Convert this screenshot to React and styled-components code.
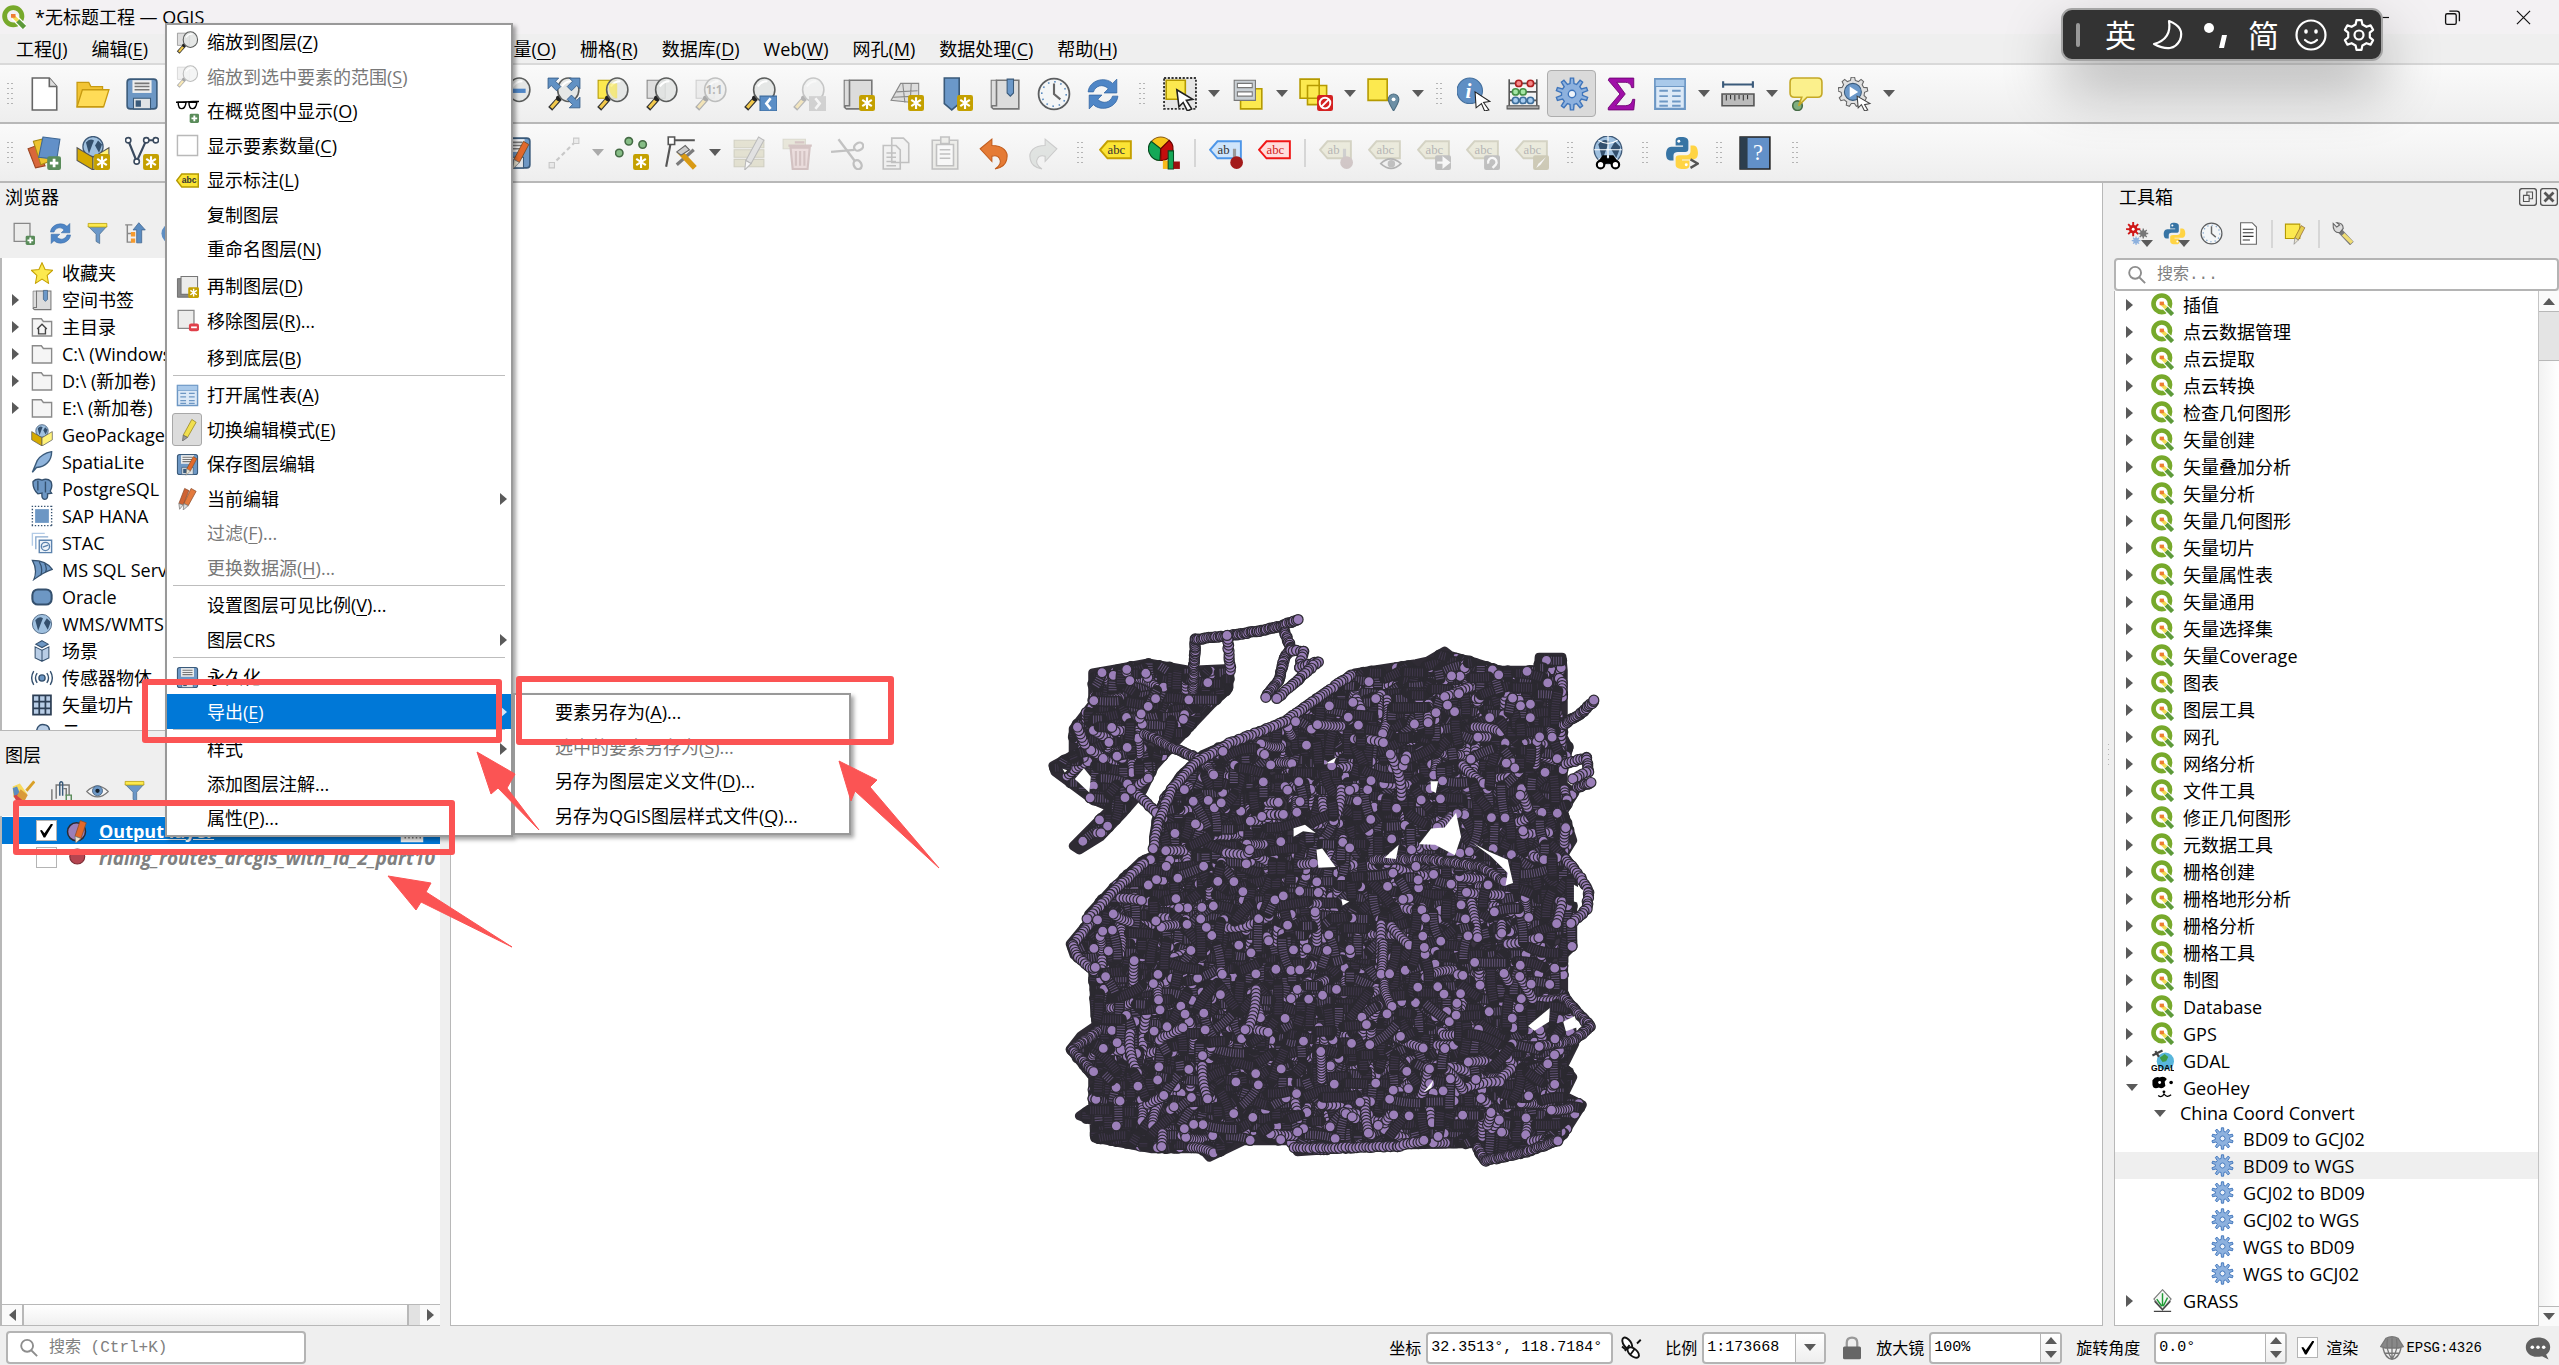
import React, { useMemo, useState } from "react";
import styled, { createGlobalStyle, css } from "styled-components";

/* ---------- icons ---------- */

const gearPath = (teeth, outer, inner, cx = 16, cy = 16) => {
  const pts = [];
  const step = (Math.PI * 2) / teeth;
  for (let i = 0; i < teeth; i++) {
    const a = i * step - Math.PI / 2;
    [
      [-0.3, inner],
      [-0.16, outer],
      [0.16, outer],
      [0.3, inner],
    ].forEach(([k, r]) => {
      const x = cx + Math.cos(a + k * step) * r;
      const y = cy + Math.sin(a + k * step) * r;
      pts.push(`${x.toFixed(1)} ${y.toFixed(1)}`);
    });
  }
  return `M${pts.join("L")}Z`;
};

const star = (
  <g>
    <rect x="17" y="17" width="15" height="15" rx="2" fill="#c4a000" />
    <path d="M24.5 19v11M20 21.5l9 6M29 21.5l-9 6" stroke="#fff" strokeWidth="2" />
  </g>
);
const plus = (
  <g>
    <rect x="19" y="19" width="13" height="13" rx="2" fill="#5a8c5a" />
    <path d="M25.5 21.5v8M21.5 25.5h8" stroke="#fff" strokeWidth="2.6" />
  </g>
);
const lens = (
  <g>
    <path d="M12 20L3 30" stroke="#333" strokeWidth="5" />
    <path d="M10 22L4 29" stroke="#f2c94c" strokeWidth="3" />
    <circle cx="11" cy="20" r="2.5" fill="#222" />
    <ellipse cx="20" cy="12" rx="10" ry="11" fill="#e2e4e3" fillOpacity="0.85" stroke="#5b5d5c" strokeWidth="1.5" />
    <path d="M14 9q3-5 9-5" stroke="#fff" strokeWidth="2" fill="none" />
  </g>
);
const cursor = (
  <path d="M13 12l15 9-6 1 5 8-4 2-4-8-4 4z" fill="#fff" stroke="#222" strokeWidth="1.5" />
);
const disk = (
  <g>
    <rect x="2" y="2" width="28" height="28" rx="3" fill="#6d97c4" stroke="#3a5a7a" strokeWidth="1.5" />
    <path d="M7 3h18v12H7z" fill="#eee" />
    <path d="M9 6h14M9 9h14M9 12h14" stroke="#777" strokeWidth="1.5" />
    <path d="M8 20h16v10H8z" fill="#dfe3e6" stroke="#3a5a7a" />
    <path d="M10 22h5v6h-5z" fill="#3a5a7a" />
  </g>
);
const pencil = (color) => (
  <g>
    <path d="M24 5l5 3-9 17-5-3z" fill={color} stroke="#7a4a20" strokeWidth="0.8" />
    <path d="M15 22l5 3-6 6z" fill="#e8e2d0" stroke="#777" strokeWidth="0.8" />
  </g>
);
const tag = (fill, stroke, text, color) => (
  <g>
    <path d="M8 5h22v16H8L1 13z" fill={fill} stroke={stroke} strokeWidth="1.8" />
    <text x="8" y="17" fontSize="12" fontFamily="Liberation Serif" fill={color}>
      {text}
    </text>
  </g>
);
const globe = (cx, cy, r) => (
  <g>
    <circle cx={cx} cy={cy} r={r} fill="#9fc0df" stroke="#3f5a78" strokeWidth="1.2" />
    <path
      d={`M${cx - r * 0.7} ${cy - r * 0.4}q${r * 0.4} ${-r * 0.5} ${r * 0.8} ${-r * 0.2}l${-r * 0.2} ${r * 0.5}l${-r * 0.3} ${r * 0.8}z`}
      fill="#34506e"
    />
    <path
      d={`M${cx + r * 0.2} ${cy - r * 0.1}l${r * 0.3} ${-r * 0.5}l${r * 0.4} ${r * 0.4}l${-r * 0.3} ${r * 0.8}z`}
      fill="#34506e"
    />
  </g>
);
const refresh = (
  <g fill="#4f86c6" stroke="#2f62a0" strokeWidth="0.7">
    <path d="M2 14C3 3 18-1 25 6l4-4v13H17l4-4C16 6 9 8 7 14z" />
    <path d="M30 18C29 29 14 33 7 26l-4 4V17h12l-4 4c5 5 12 3 14-3z" />
  </g>
);
const python = (
  <g>
    <path
      d="M16 1c-6 0-6 2-6 4v4h7v1H6c-4 0-5 4-5 7s1 6 4 6h3v-5c0-2 2-3 4-3h7c2 0 3-1 3-3V5c0-3-3-4-6-4z"
      fill="#3774a4"
    />
    <path
      d="M17 31c6 0 6-2 6-4v-4h-7v-1h10c4 0 5-3 5-6s-1-7-4-7h-3v5c0 3-2 4-4 4h-6c-3 0-4 1-4 3v6c0 3 3 4 7 4z"
      fill="#ffd444"
    />
    <circle cx="13" cy="5" r="1.4" fill="#fff" />
    <circle cx="20" cy="27" r="1.4" fill="#fff" />
  </g>
);
const funnel = (
  <g>
    <path d="M3 6h26L19 17v13l-5-3V17z" fill="#6b98c9" stroke="#4a6b8c" />
    <path d="M3 2h26v5H3z" fill="#fce94f" stroke="#b59a00" />
  </g>
);
const folder = (
  <path d="M2 4h13l3 4h12v21H2z" fill="#f5f5f5" stroke="#8a8a8a" strokeWidth="2" />
);
const book = (
  <g>
    <path d="M3 3h5v24H5q-2 0-2 2z" fill="#ddd" stroke="#777" />
    <path d="M8 3h21v27H5q-2-1-1-3h4z" fill="#dcdcdc" stroke="#777" strokeWidth="1.5" />
  </g>
);
const clock = (
  <g>
    <circle cx="16" cy="16" r="14.5" fill="#f4f6f7" stroke="#5c5e60" strokeWidth="1.7" />
    <circle cx="16" cy="16" r="11.5" fill="none" stroke="#5b8cc0" strokeWidth="1.5" strokeDasharray="1.5 4.5" />
    <path d="M16 6v10l6 5" fill="none" stroke="#666" strokeWidth="2" />
  </g>
);
const tableShape = (
  <g>
    <path d="M2 2h28v28H2z" fill="#dce9f7" stroke="#6d97c4" strokeWidth="2" />
    <path d="M2 2h28v7H2z" fill="#a9c9ea" stroke="#6d97c4" />
    <path d="M6 13h8M18 13h8M6 18h8M18 18h8M6 23h8M18 23h8M6 27h8M18 27h8" stroke="#6d97c4" strokeWidth="1.8" />
  </g>
);
const page = (
  <path d="M3 2h22v25H3z" fill="#ececeb" stroke="#888" strokeWidth="1.8" />
);

const icons = {
  qgis: (
    <g fill="none">
      <circle cx="15" cy="15" r="11.5" stroke="#77a92b" strokeWidth="6.5" />
      <path d="M16 16l15 15" stroke="#fff" strokeWidth="9" />
      <path d="M21 21l9 9" stroke="#5d9a3a" strokeWidth="6" />
      <path d="M15 15l6 6" stroke="#f3dd55" strokeWidth="5" />
      <path d="M12 12h6v5h-6z" fill="#ee7d33" />
    </g>
  ),
  file: (
    <g fill="#fff" stroke="#666" strokeWidth="1.5">
      <path d="M5 1h16l7 8v22H5z" />
      <path d="M21 1v8h7" fill="#ddd" />
    </g>
  ),
  open: (
    <g stroke="#c79a10" strokeWidth="1.2">
      <path d="M1 5h11l2 4h11v19H1z" fill="#f2c434" />
      <path d="M6 12h25l-5 16H1z" fill="#ffdc57" />
    </g>
  ),
  save: disk,
  zoomOut: (
    <g>
      {lens}
      <path d="M14 13h12" stroke="#4f86c6" strokeWidth="4" />
    </g>
  ),
  zoomFull: (
    <g>
      {lens}
      <path
        d="M1 1h10L8 4l5 5-4 4-5-5-3 3zM31 1H21l3 3-5 5 4 4 5-5 3 3zM31 29H21l3-3-5-5 4-4 5 5 3-3z"
        fill="#6191c4"
        stroke="#335a85"
        strokeWidth="0.8"
      />
    </g>
  ),
  zoomSelection: (
    <g>
      <path d="M2 3h17v17H2z" fill="#fce94f" stroke="#b59a00" />
      {lens}
      <path d="M12 6h8v14q-8-1-8-14z" fill="#fce94f" opacity="0.6" />
    </g>
  ),
  zoomLayer: (
    <g>
      <path d="M2 3h17v17H2z" fill="#dedede" stroke="#888" />
      {lens}
    </g>
  ),
  zoomNative: (
    <g opacity="0.35">
      <path d="M2 3h17v17H2z" fill="#ddd" stroke="#888" />
      {lens}
      <text x="11" y="16" fontSize="11" fontWeight="700" fontFamily="Open Sans" fill="#444">
        1:1
      </text>
    </g>
  ),
  zoomLast: (
    <g>
      {lens}
      <path d="M16 18h16v14H16z" fill="#5b8ec6" stroke="#3b6a9c" />
      <path d="M26 20l-4 5 4 5" fill="none" stroke="#fff" strokeWidth="2.5" />
    </g>
  ),
  zoomNext: (
    <g opacity="0.3">
      {lens}
      <path d="M16 18h16v14H16z" fill="#888" />
      <path d="M22 20l4 5-4 5" fill="none" stroke="#fff" strokeWidth="2.5" />
    </g>
  ),
  newMap: (
    <g>
      {book}
      {star}
    </g>
  ),
  mesh: (
    <g>
      <path d="M1 22L10 6h17v16l-6 2z" fill="#ddd" stroke="#888" />
      <path d="M6 14l20-1M12 6l2 18M20 6l-1 18M3 19l23-1" stroke="#888" fill="none" />
      {star}
    </g>
  ),
  bookmarkNew: (
    <g>
      <path d="M5 1h14v24l-7 6-7-6z" fill="#6b98c9" stroke="#3a5a7a" strokeWidth="1.5" />
      {star}
    </g>
  ),
  bookmarks: (
    <g>
      {book}
      <path d="M18 2h6v13l-3 3-3-3z" fill="#6b98c9" stroke="#3a5a7a" />
    </g>
  ),
  clock,
  refresh,
  select: (
    <g>
      <path d="M1 1h30v29H1z" fill="#e6e6e6" stroke="#333" strokeWidth="1.8" strokeDasharray="2 1.5" />
      <path d="M3 3h18v18H3z" fill="#fce94f" stroke="#b59a00" strokeWidth="1.5" />
      {cursor}
    </g>
  ),
  selectForm: (
    <g>
      <path d="M9 11h20v19H9z" fill="#fce94f" stroke="#b59a00" strokeWidth="1.5" />
      <path d="M3 3h20v19H3z" fill="#c9cfd4" stroke="#777" />
      <path d="M6 6h14v4H6zM6 14h14v4H6z" fill="#fff" stroke="#777" />
    </g>
  ),
  deselect: (
    <g>
      <path d="M1 2h18v18H1zM8 8h18v18H8z" fill="#fce94f" stroke="#b59a00" strokeWidth="1.5" />
      <rect x="17" y="17" width="15" height="15" rx="2" fill="#d42121" />
      <circle cx="24.5" cy="24.5" r="5" fill="none" stroke="#fff" strokeWidth="1.8" />
      <path d="M21 28l7-7" stroke="#fff" strokeWidth="1.8" />
    </g>
  ),
  selectLocation: (
    <g>
      <path d="M1 2h18v20H1z" fill="#fce94f" stroke="#b59a00" strokeWidth="1.5" />
      <path d="M25 32q-5-8-5-11a5 5 0 0110 0q0 3-5 11z" fill="#6c8fa5" stroke="#4b6c80" />
      <circle cx="25" cy="21" r="1.8" fill="#fff" />
    </g>
  ),
  identify: (
    <g>
      <circle cx="12" cy="13" r="12" fill="#5f8fc4" stroke="#44709e" />
      <text x="8" y="20" fontSize="20" fontStyle="italic" fontWeight="700" fontFamily="Liberation Serif" fill="#fff">
        i
      </text>
      <path d="M17 14l14 9-6 1 5 7-4 1-3-7-5 4z" fill="#fff" stroke="#222" />
    </g>
  ),
  abacus: (
    <g>
      <path d="M3 2v25M29 2v25M3 6h26M3 14h26M3 22h26" stroke="#555" strokeWidth="1.5" />
      <path d="M1 27h30v3H1z" fill="#aaa" stroke="#555" />
      <g strokeWidth="1.5">
        <g fill="#f58a8a" stroke="#b02020">
          <circle cx="12" cy="6" r="3" />
          <circle cx="23" cy="6" r="3" />
        </g>
        <g fill="#a5e6a5" stroke="#459045">
          <circle cx="9" cy="14" r="3" />
          <circle cx="16" cy="14" r="3" />
        </g>
        <g fill="#a9cdf0" stroke="#3e6f9c">
          <circle cx="9" cy="22" r="3" />
          <circle cx="16" cy="22" r="3" />
          <circle cx="23" cy="22" r="3" />
        </g>
      </g>
    </g>
  ),
  gear: (
    <g stroke="#3f75bb" strokeWidth="1.3">
      <path d={gearPath(10, 15, 10)} fill="#8db1de" />
      <circle cx="16" cy="16" r="3.5" fill="#eef3fa" />
    </g>
  ),
  sigma: (
    <path
      d="M5 1h23v9h-2q-1-5-6-5h-8l8 11-9 11h9q6 0 7-6h2l-1 10H4v-2l11-13L4 3z"
      fill="#a00fa8"
      stroke="#6b006f"
      strokeWidth="0.8"
    />
  ),
  table: tableShape,
  ruler: (
    <g>
      <path d="M1 7h30M2 4v6M30 4v6" stroke="#3a5a7a" strokeWidth="2" />
      <path d="M1 16h30v11H1z" fill="#bbb" stroke="#555" strokeWidth="1.5" />
      <path d="M5 17v5M9 17v4M13 17v5M17 17v4M21 17v5M25 17v4" stroke="#333" />
    </g>
  ),
  note: (
    <g>
      <circle cx="8" cy="27" r="4.5" fill="#7fae7f" stroke="#456b45" strokeWidth="1.5" />
      <path
        d="M5 1h22q4 0 4 4v10q0 4-4 4H17l-8 8 3-8H5q-4 0-4-4V5q0-4 4-4z"
        fill="#fbf08c"
        stroke="#c4a826"
        strokeWidth="1.5"
      />
    </g>
  ),
  run: (
    <g>
      <path d={gearPath(9, 14, 11, 14, 14)} fill="#e0e0e0" stroke="#666" />
      <circle cx="14" cy="14" r="8" fill="#6b98c9" stroke="#3a5a7a" />
      <path d="M11 9l8 5-8 5z" fill="#fff" />
      <path d="M18 18l12 7-5 1 3 5-3 1-3-6-3 3z" fill="#fff" stroke="#444" />
    </g>
  ),
  layers: (
    <g>
      <path d="M1 12l8-3 8 19-9 2z" fill="#d9673a" stroke="#9a4523" />
      <path d="M6 5l8-2 7 21-8 3z" fill="#edc32d" stroke="#a88a12" />
      <path d="M15 1l16 2-3 19-17-2z" fill="#6290c8" stroke="#3f6896" />
      {plus}
    </g>
  ),
  geopackage: (
    <g>
      {globe(16, 10, 9.5)}
      <path d="M1 11l15 9v12L1 23z" fill="#d6aa00" stroke="#555" />
      <path d="M31 11l-15 9v12l15-9z" fill="#fff27a" stroke="#555" />
      {star}
    </g>
  ),
  vertices: (
    <g>
      <path d="M3 4l8 20 9-20h9" fill="none" stroke="#3a4a5e" strokeWidth="2" />
      <g fill="#fff" stroke="#3a4a5e" strokeWidth="1.5">
        <circle cx="3" cy="4" r="2.5" />
        <circle cx="11" cy="24" r="2.5" />
        <circle cx="20" cy="4" r="2.5" />
        <circle cx="29" cy="4" r="2.5" />
      </g>
      {star}
    </g>
  ),
  saveEdits: (
    <g>
      {disk}
      {pencil("#e2692b")}
    </g>
  ),
  digitize: (
    <g opacity="0.4" stroke="#888" fill="#ddd">
      <path d="M4 28L28 4" strokeDasharray="4 3" strokeWidth="2" />
      <path d="M2 25h5v5H2zM25 2h5v5h-5z" />
    </g>
  ),
  points: (
    <g>
      <g fill="#86bd86" stroke="#456b45" strokeWidth="1.5">
        <circle cx="13" cy="5" r="3.5" />
        <circle cx="26" cy="8" r="3.5" />
        <circle cx="4" cy="16" r="3.5" />
      </g>
      {star}
    </g>
  ),
  vertexTool: (
    <g>
      <path d="M7 4h22M6 8L2 29" stroke="#555" strokeWidth="2" />
      <path d="M4 1h6v7H4z" fill="#fff" stroke="#555" strokeWidth="1.5" />
      <path d="M12 27l16-14" stroke="#7b7b7b" strokeWidth="3" />
      <path d="M14 14l15 16" stroke="#d99a14" strokeWidth="5" />
      <path d="M12 15l8-6 4 4-8 5z" fill="#ccc" stroke="#666" />
    </g>
  ),
  tableEdit: (
    <g opacity="0.45">
      <path d="M2 4h28v7H2zM2 13h28v7H2zM2 22h28v7H2z" fill="#cfcba8" stroke="#a8a588" />
      <path d="M25 1l5 3-12 22-5-3z" fill="#ccc" stroke="#777" />
      <path d="M13 23l5 3-6 6z" fill="#fff" stroke="#777" />
    </g>
  ),
  trash: (
    <g opacity="0.35">
      <path d="M2 3h21v9H2z" fill="#cfcba8" stroke="#a8a588" />
      <path d="M7 9h22M13 6h9M9 11h18l-2 20H11zM14 14v14M18 14v14M22 14v14" fill="#dcb5b5" stroke="#9b6b6b" strokeWidth="2" />
    </g>
  ),
  cut: (
    <g opacity="0.4" fill="none" stroke="#777" strokeWidth="2.2">
      <path d="M1 15l22-2M8 3l15 20" />
      <ellipse cx="27" cy="10" rx="4.500" ry="3.500" transform="rotate(-30 27 10)" />
      <ellipse cx="26" cy="27" rx="3.500" ry="4.500" transform="rotate(-30 26 27)" />
    </g>
  ),
  copy: (
    <g opacity="0.4" fill="#eee" stroke="#777" strokeWidth="1.5">
      <path d="M12 2h11l5 5v18H12zM4 9h12l4 4v18H4z" />
      <path d="M7 16h9M7 20h9M7 24h9M7 28h9" />
    </g>
  ),
  paste: (
    <g opacity="0.4" fill="#e2e2da" stroke="#777" strokeWidth="1.5">
      <path d="M4 4h24v27H4z" />
      <path d="M8 8h16v20H8z" fill="#fff" />
      <path d="M12 1h8v6h-8zM11 13h10M11 17h10M11 21h10" />
    </g>
  ),
  undo: (
    <path d="M3 12L14 3v6c10 0 16 5 14 13-1 5-5 8-11 9 5-3 6-7 4-10-1-2-4-3-7-2v5z" fill="#e57b35" stroke="#c25c1c" />
  ),
  redo: (
    <path
      opacity="0.45"
      d="M29 12L18 3v6C8 9 2 14 4 22c1 5 5 8 11 9-5-3-6-7-4-10 1-2 4-3 7-2v5z"
      fill="#c9cfcb"
      stroke="#999"
    />
  ),
  label: tag("#fbe435", "#c4a000", "abc", "#333"),
  diagram: (
    <g>
      <circle cx="12" cy="12" r="11" fill="#f8c51b" stroke="#8a5a10" />
      <path d="M12 12L3 5a11 11 0 008 18z" fill="#14a857" stroke="#064a20" />
      <path d="M12 12l8-8a11 11 0 01-8 19z" fill="#c30d0d" stroke="#600" />
      <path d="M14 23h5v8h-5z" fill="#f8b81b" />
      <path d="M19 14h5v17h-5z" fill="#14a857" stroke="#064a20" />
      <path d="M24 24h6v7h-6z" fill="#9c1010" />
    </g>
  ),
  labelPin: (
    <g>
      {tag("#cfe5fb", "#4d96e8", "ab", "#333")}
      <path d="M24 12v10" stroke="#999" strokeWidth="3" />
      <circle cx="26" cy="25" r="6" fill="#a31a1a" />
    </g>
  ),
  labelRed: tag("#ffdcdc", "#f01515", "abc", "#d02020"),
  labelOffPin: (
    <g opacity="0.4">
      {tag("#dcdab8", "#a3a07a", "ab", "#555")}
      <path d="M24 12v10" stroke="#999" strokeWidth="3" />
      <circle cx="26" cy="25" r="6" fill="#a08888" />
    </g>
  ),
  labelOffEye: (
    <g opacity="0.4">
      {tag("#dcdab8", "#a3a07a", "abc", "#555")}
      <path d="M12 26q9-9 19 0-9 9-19 0z" fill="#eee" stroke="#555" strokeWidth="1.5" />
      <circle cx="22" cy="26" r="3.5" fill="#777" />
    </g>
  ),
  labelOffMove: (
    <g opacity="0.4">
      {tag("#dcdab8", "#a3a07a", "abc", "#555")}
      <rect x="17" y="18" width="15" height="14" rx="2" fill="#777" />
      <path d="M19 25h7M25 21l5 4-5 4z" stroke="#fff" strokeWidth="2" fill="#fff" />
    </g>
  ),
  labelOffRotate: (
    <g opacity="0.4">
      {tag("#dcdab8", "#a3a07a", "abc", "#555")}
      <rect x="17" y="18" width="15" height="14" rx="2" fill="#777" />
      <path d="M21 26a4 4 0 117 1l-3 3" stroke="#fff" strokeWidth="2.2" fill="none" />
    </g>
  ),
  labelOffEdit: (
    <g opacity="0.4">
      {tag("#dcdab8", "#a3a07a", "abc", "#555")}
      <rect x="17" y="18" width="15" height="14" rx="2" fill="#999060" />
      <path d="M20 30l2-4 7-6-5 7z" fill="#fff" />
    </g>
  ),
  search: (
    <g>
      {globe(16, 13, 13)}
      <path d="M16 0v26M3 13h26M7 4q9 6 18 0M7 22q9-6 18 0" stroke="#fff" fill="none" />
      <path d="M11 18h4v3h2v-3h4l6 8-5 5-4-5h-4l-4 5-5-5z" fill="#000" />
      <circle cx="9" cy="27" r="3.5" fill="#fff" stroke="#000" strokeWidth="2" />
      <circle cx="23" cy="27" r="3.5" fill="#fff" stroke="#000" strokeWidth="2" />
    </g>
  ),
  pythonConsole: (
    <g>
      {python}
      <path d="M24 22l7 4-7 4" fill="none" stroke="#555" strokeWidth="2.2" />
    </g>
  ),
  python,
  help: (
    <g>
      <path d="M2 1h28v30H2z" fill="#6290c8" stroke="#222" strokeWidth="1.5" />
      <path d="M2 1h7v30H2z" fill="#2c3e4e" />
      <text x="14" y="23" fontSize="21" fontFamily="Liberation Serif" fill="#fff">
        ?
      </text>
    </g>
  ),
  addLayer: (
    <g>
      {page}
      {plus}
    </g>
  ),
  funnel,
  collapse: (
    <g>
      <path d="M3 4h10M6 4v24h6M6 16h6" stroke="#888" strokeWidth="2" fill="none" />
      <path d="M11 14h6v6h-6zM11 23h6v6h-6z" fill="#f59a2e" />
      <path d="M22 1l9 10h-5v18h-7V11h-5z" fill="#5b8cc0" stroke="#3a5f8a" />
    </g>
  ),
  info: <circle cx="16" cy="16" r="14" fill="#5f8fc4" />,
  favourite: (
    <path d="M16 1l4.500 10 11 1-8 7.500 2 11.500-9.500-6-9.500 6 2-11.500-8-7.500 11-1z" fill="#fce94f" stroke="#c4a000" strokeWidth="1.5" />
  ),
  home: (
    <g>
      {folder}
      <path d="M9 19l7-7 7 7M11 18v8h10v-8" fill="none" stroke="#444" strokeWidth="2" />
    </g>
  ),
  folder,
  package: (
    <g>
      {globe(16, 10, 9)}
      <path d="M1 11l15 9v12L1 23z" fill="#d6aa00" stroke="#555" />
      <path d="M31 11l-15 9v12l15-9z" fill="#fff27a" stroke="#555" />
    </g>
  ),
  feather: (
    <path d="M2 31L9 14Q15 4 30 1q0 10-6 16T8 24z" fill="#8fb4dc" stroke="#3a5a7a" strokeWidth="2" />
  ),
  elephant: (
    <path
      d="M3 5Q8 0 16 3q8-3 13 2 3 7-1 14l2 3-6 1q1 8-4 8t-4-9l-6 1Q2 16 3 5zM10 4v14M21 5v16"
      fill="#6d97c4"
      stroke="#34506e"
      strokeWidth="2"
    />
  ),
  hana: (
    <g>
      <path d="M6 6h20v20H6z" fill="#6d97c4" />
      <path d="M1 2h30M1 30h30M2 1v30M30 1v30" stroke="#34506e" strokeWidth="2" strokeDasharray="2 2.5" />
    </g>
  ),
  stac: (
    <g fill="none" strokeWidth="2">
      <path d="M2 20V2h18" stroke="#b3cbe6" />
      <path d="M7 25V7h18" stroke="#8aabd0" />
      <path d="M12 12h18v18H12z" stroke="#5b82ad" fill="#eef4fa" />
      <circle cx="21" cy="21" r="6" stroke="#5b82ad" />
      <path d="M17 22l8-3" stroke="#5b82ad" />
    </g>
  ),
  mssql: (
    <path d="M2 2q20 0 29 13Q20 18 4 30q6-14-2-28zM12 4q6 10 2 20M20 7q4 7 1 12" fill="#6d97c4" stroke="#34506e" strokeWidth="1.8" />
  ),
  oracle: <rect x="2" y="5" width="28" height="22" rx="8" fill="#6d97c4" stroke="#34506e" strokeWidth="3" />,
  wms: globe(16, 16, 14),
  scene: (
    <g fill="#b8cde6" stroke="#34506e" strokeWidth="1.5">
      <path d="M16 1l9 5-9 5-9-5z" fill="#6d97c4" />
      <path d="M6 10l10 5v16L6 26zM26 10l-10 5v16l10-5z" />
    </g>
  ),
  sensor: (
    <g fill="none" stroke="#34506e" strokeWidth="2">
      <circle cx="16" cy="16" r="4.5" fill="#6d97c4" />
      <path d="M9 9q-5 7 0 14M23 9q5 7 0 14M4 6q-6 10 0 20M28 6q6 10 0 20" />
    </g>
  ),
  grid: (
    <path d="M3 2h26v28H3zM12 2v28M21 2v28M3 11h26M3 21h26" fill="#b8cde6" stroke="#2c3e54" strokeWidth="2.5" />
  ),
  cloud: <path d="M4 26q-5-8 4-11 2-13 14-9 5 2 5 9 8 4 2 11z" fill="#b8cde6" stroke="#34506e" strokeWidth="2" />,
  glasses: (
    <g>
      <path d="M0 3h8l16-1h8" fill="none" stroke="#000" strokeWidth="2" />
      <path d="M3 3q0 9 5 9t6-9zM18 3q0 9 5 9t6-9z" fill="#fff" stroke="#000" strokeWidth="2" />
      {plus}
    </g>
  ),
  box: <path d="M2 2h28v28H2z" fill="#fff" stroke="#b9b9b9" strokeWidth="2" />,
  labelSmall: (
    <g>
      <path d="M8 7h23v18H8l-7-9z" fill="#fbe435" stroke="#b59a00" strokeWidth="2" />
      <text x="8" y="20" fontSize="12" fontWeight="700" fontFamily="Liberation Sans" fill="#333">
        abc
      </text>
    </g>
  ),
  duplicate: (
    <g>
      <path d="M2 5h20v26H2z" fill="#888" stroke="#555" />
      <path d="M7 2h23v25H7z" fill="#ececeb" stroke="#777" strokeWidth="1.5" />
      {star}
    </g>
  ),
  removeLayer: (
    <g>
      {page}
      <rect x="18" y="20" width="14" height="11" rx="3" fill="#e0404a" />
      <path d="M21 25.5h8" stroke="#fff" strokeWidth="2.5" />
    </g>
  ),
  pencil: (
    <g>
      <path d="M22 2l6 4-12 21-6-3z" fill="#f1df4e" stroke="#8f7d16" />
      <path d="M10 24l6 3-7 5z" fill="#999" stroke="#666" />
    </g>
  ),
  pencils: (
    <g stroke="#8a4a28">
      <path d="M12 2l6 3-8 20-6-2z" fill="#cf6333" />
      <path d="M21 2l7 4-11 20-6-3z" fill="#e37a3d" />
      <path d="M4 23l6 2-5 6zM11 23l6 3-7 6z" fill="#ddd" stroke="#777" />
    </g>
  ),
  brush: (
    <g>
      <path d="M1 9l10-4 10 14-8 10-11-5z" fill="#f7d95b" />
      <path d="M1 11l6-2 5 12-9 2z" fill="#5b8cc0" />
      <path d="M2 22l9-3 4 8-8 4z" fill="#d64545" />
      <path d="M31 2L20 15" stroke="#d9a028" strokeWidth="4" />
      <path d="M12 13l10 8-5 9-10-8z" fill="#d99a3a" />
    </g>
  ),
  group: (
    <g fill="none" stroke="#777" strokeWidth="2">
      <path d="M10 26V7h18v14M4 30V13M20 12h4v10" />
      <path d="M15 22V4q2-3 4 0v18" stroke="#3a5a7a" strokeWidth="2" />
      <path d="M24 21h7v9h-7z" stroke="#5a8c5a" />
    </g>
  ),
  eye: (
    <g>
      <path d="M1 16q15-15 30 0-15 15-30 0z" fill="#f6f6f6" stroke="#777" strokeWidth="1.5" />
      <circle cx="16" cy="15" r="7" fill="#6d97c4" stroke="#34506e" />
      <circle cx="16" cy="15" r="3" fill="#16222e" />
    </g>
  ),
  pointEdit: (
    <g>
      <circle cx="14" cy="17" r="12" fill="#9b7fb9" stroke="#2b2930" strokeWidth="2" />
      <path d="M19 2l8 3-7 21-8-3z" fill="#e2692b" stroke="#8a4a28" />
      <path d="M12 23l8 3-7 6z" fill="#e8e2d0" stroke="#777" />
    </g>
  ),
  point: <circle cx="15" cy="14" r="10" fill="#b64550" stroke="#7d2b33" strokeWidth="1.5" />,
  memory: (
    <g>
      <path d="M1 1h30v30H1z" fill="#f6f6f6" />
      <path d="M5 16h22M7 16v10M12 16v10M17 16v10M22 16v10M27 16v10" stroke="#777" strokeWidth="2" />
    </g>
  ),
  models: (
    <g>
      <path d={gearPath(8, 10, 6, 10, 10)} fill="#cf1818" />
      <path d={gearPath(8, 7, 4.5, 24, 16)} fill="#777" />
      <path d={gearPath(8, 6, 4, 14, 26)} fill="#8db1de" />
      <circle cx="10" cy="10" r="2" fill="#fff" />
    </g>
  ),
  log: (
    <g fill="#fff" stroke="#666" strokeWidth="1.5">
      <path d="M5 1h16l6 6v24H5z" />
      <path d="M8 10h15M8 15h15M8 20h15M8 25h10" stroke="#333" />
    </g>
  ),
  editInPlace: (
    <g>
      <path d="M2 3h20v20H2z" fill="#fce94f" stroke="#b59a00" strokeWidth="1.5" />
      {pencil("#e6cf4e")}
    </g>
  ),
  wrench: (
    <g>
      <path d="M13 13l16 17" stroke="#777" strokeWidth="7" />
      <path d="M17 17l12 12" stroke="#f0dc74" strokeWidth="5" />
      <path d="M3 2l5 5 4-3-4-3q9 0 9 8l-5 6Q2 15 3 2z" fill="#ddd" stroke="#666" strokeWidth="1.5" />
    </g>
  ),
  glass: (
    <path d="M20 20l9 9M13 3a9 9 0 100 19 9 9 0 000-19z" fill="none" stroke="#8d8d8d" strokeWidth="3" />
  ),
  gdal: (
    <g>
      <circle cx="20" cy="17" r="12" fill="#58b6dc" />
      <path d="M12 12l7-5 5 4-3 6-5 1z" fill="#3f9b46" />
      <path d="M2 9L16 2M6 3l5 8" stroke="#444" strokeWidth="3" />
      <text x="0" y="31" fontSize="12" fontWeight="700" fontFamily="Liberation Sans" fill="#000">
        GDAL
      </text>
    </g>
  ),
  geohey: (
    <g>
      <path d="M2 6q4-6 10-4 6-3 10 2l-3 4 1 6q-5 5-9 2-8 3-9-4z" fill="#000" />
      <circle cx="12" cy="9" r="2" fill="#fff" />
      <circle cx="28" cy="9" r="2.5" fill="#000" />
      <path d="M10 27q5 4 8-2 4 6 10 1" fill="none" stroke="#000" strokeWidth="1.8" />
      <circle cx="18" cy="22" r="2" />
    </g>
  ),
  grass: (
    <g>
      <path d="M16 1l12 13-12 14L4 14z" fill="#f3f8f3" stroke="#777" strokeWidth="1.5" />
      <path d="M15 24L8 14M16 24V6M17 24l6-12" stroke="#1f9a35" strokeWidth="2" />
      <path d="M4 31h24M5 17l11 12 11-12" stroke="#444" strokeWidth="1.8" fill="none" />
    </g>
  ),
  tracking: (
    <g fill="#fff" stroke="#111" strokeWidth="2.5">
      <ellipse cx="11" cy="10" rx="5" ry="9" transform="rotate(-35 11 10)" />
      <ellipse cx="19" cy="22" rx="5" ry="9" transform="rotate(-50 19 22)" />
      <path d="M8 20l6-8M15 25l6-8M24 10l5-5M4 14l6 5" />
    </g>
  ),
  lock: (
    <g>
      <path d="M9 15V9q0-7 7-7t7 7v6" fill="none" stroke="#999" strokeWidth="3" />
      <rect x="4" y="14" width="24" height="17" rx="2" fill="#666" />
    </g>
  ),
  projection: (
    <g fill="none" stroke="#777" strokeWidth="1.8">
      <path d="M8 3q8-4 16 0l7 11-6 2H7l-6-2z" fill="#888" />
      <path d="M4 16q3 14 12 15 9-1 12-15M16 3v28M10 4q-3 14 6 27M22 4q3 14-6 27M6 23h20" />
    </g>
  ),
  message: (
    <g>
      <path d="M16 3c9 0 15 5 15 12 0 4-2 7-5 9l3 6-8-4c-12 3-20-3-20-11C1 8 7 3 16 3z" fill="#606060" />
      <circle cx="9" cy="15" r="2.2" fill="#fff" />
      <circle cx="16" cy="15" r="2.2" fill="#fff" />
      <circle cx="23" cy="15" r="2.2" fill="#fff" />
    </g>
  ),
  moon: (
    <path d="M17 2q16 6 11 19-7 14-26 4Q20 20 17 2z" fill="none" stroke="#fff" strokeWidth="2.2" strokeLinejoin="round" />
  ),
  punctuation: (
    <g fill="#fff">
      <circle cx="9" cy="9" r="5" />
      <path d="M22 16h5l-3 13h-5z" />
    </g>
  ),
  smile: (
    <g fill="none" stroke="#fff" strokeWidth="2.2" strokeLinecap="round">
      <circle cx="16" cy="16" r="14.5" />
      <path d="M10 21q6 6 12 0" />
      <path d="M11 12v1M21 12v1" strokeWidth="3.5" />
    </g>
  ),
  settings: (
    <g fill="none" stroke="#fff" strokeWidth="2.2" strokeLinejoin="round">
      <path d={gearPath(6, 15, 11)} />
      <circle cx="16" cy="16" r="4.5" />
    </g>
  ),
  restore: (
    <g fill="none" stroke="#111" strokeWidth="2.5">
      <rect x="3" y="9" width="20" height="20" rx="3" />
      <path d="M10 4h14q5 0 5 5v14" />
    </g>
  ),
  close: <path d="M2 2l28 28M30 2L2 30" stroke="#111" strokeWidth="2.5" />,
  minimize: <path d="M0 16h32" stroke="#111" strokeWidth="2.5" />,
  dockFloat: (
    <g fill="none" stroke="#555" strokeWidth="2">
      <rect x="1" y="1" width="30" height="30" rx="5" strokeWidth="2.5" />
      <path d="M8 13h10v11H8zM14 12V7h10v12h-5" />
    </g>
  ),
  dockClose: (
    <g fill="none" stroke="#555">
      <rect x="1" y="1" width="30" height="30" rx="5" strokeWidth="2.5" />
      <path d="M8 8l16 16M24 8L8 24" strokeWidth="5" />
    </g>
  ),
};

const Icon = ({ name, size = 22 }) => (
  <svg width={size} height={size} viewBox="0 0 32 32" aria-hidden="true">
    {icons[name]}
  </svg>
);

/* ---------- data ---------- */

const menuBar = [
  "工程(&J)",
  "编辑(&E)",
  "视图(&V)",
  "图层(&L)",
  "设置(&S)",
  "插件(&P)",
  "矢量(&O)",
  "栅格(&R)",
  "数据库(&D)",
  "Web(&W)",
  "网孔(&M)",
  "数据处理(&C)",
  "帮助(&H)",
];

// number = grip of that width, "|" = separator, "v" = drop-down arrow of the tool before it
const mainTools = [
  19, "file", "open", "save", "newMap", "log", "brush",
  30, "points", "mesh", "zoomLayer", "zoomOut", "zoomFull", "zoomSelection", "zoomLayer", "zoomNative",
  "zoomLast", "zoomNext", "newMap", "mesh", "bookmarkNew", "bookmarks", "clock", "refresh",
  28, "select", "v", "selectForm", "v", "deselect", "v", "selectLocation", "v",
  22, "identify", "abacus", "gear", "sigma", "table", "v", "ruler", "v", "note", "run", "v",
];
const editTools = [
  19, "layers", "geopackage", "vertices", "feather", "grid", "mesh", "newMap", "wms", "table",
  30, "saveEdits", "digitize", "v", "points", "vertexTool", "v", "tableEdit", "trash", "cut", "copy", "paste",
  "undo", "redo",
  24, "label", "diagram", "|", "labelPin", "labelRed", "|",
  "labelOffPin", "labelOffEye", "labelOffMove", "labelOffRotate", "labelOffEdit",
  27, "search", 25, "pythonConsole", 24, "help", 30,
];

const browserItems = [
  ["favourite", "收藏夹"],
  ["bookmarks", "空间书签", true],
  ["home", "主目录", true],
  ["folder", "C:\\ (Windows)", true],
  ["folder", "D:\\ (新加卷)", true],
  ["folder", "E:\\ (新加卷)", true],
  ["package", "GeoPackage"],
  ["feather", "SpatiaLite"],
  ["elephant", "PostgreSQL"],
  ["hana", "SAP HANA"],
  ["stac", "STAC"],
  ["mssql", "MS SQL Server"],
  ["oracle", "Oracle"],
  ["wms", "WMS/WMTS"],
  ["scene", "场景"],
  ["sensor", "传感器物体"],
  ["grid", "矢量切片"],
  ["cloud", "云"],
];

const toolGroups = [
  "插值", "点云数据管理", "点云提取", "点云转换", "检查几何图形", "矢量创建", "矢量叠加分析", "矢量分析",
  "矢量几何图形", "矢量切片", "矢量属性表", "矢量通用", "矢量选择集", "矢量Coverage", "图表", "图层工具",
  "网孔", "网络分析", "文件工具", "修正几何图形", "元数据工具", "栅格创建", "栅格地形分析", "栅格分析",
  "栅格工具", "制图", "Database", "GPS",
];
const convertTools = [
  "BD09 to GCJ02",
  "BD09 to WGS",
  "GCJ02 to BD09",
  "GCJ02 to WGS",
  "WGS to BD09",
  "WGS to GCJ02",
];

const layerMenu = [
  {
    items: [
      { icon: "zoomLayer", text: "缩放到图层(&Z)" },
      { icon: "zoomLayer", text: "缩放到选中要素的范围(&S)", off: true },
      { icon: "glasses", text: "在概览图中显示(&O)" },
      { icon: "box", text: "显示要素数量(&C)" },
      { icon: "labelSmall", text: "显示标注(&L)" },
      { text: "复制图层" },
      { text: "重命名图层(&N)" },
    ],
  },
  {
    space: true,
    items: [
      { icon: "duplicate", text: "再制图层(&D)" },
      { icon: "removeLayer", text: "移除图层(&R)..." },
    ],
  },
  { space: true, items: [{ text: "移到底层(&B)" }] },
  {
    line: true,
    items: [
      { icon: "table", text: "打开属性表(&A)" },
      { icon: "pencil", text: "切换编辑模式(&E)", pressed: true },
      { icon: "saveEdits", text: "保存图层编辑" },
      { icon: "pencils", text: "当前编辑", sub: true },
      { text: "过滤(&F)...", off: true },
      { text: "更换数据源(&H)...", off: true },
    ],
  },
  { line: true, items: [{ text: "设置图层可见比例(&V)..." }, { text: "图层CRS", sub: true }] },
  { line: true, items: [{ icon: "save", text: "永久化" }, { text: "导出(&E)", sub: true, active: true }] },
  { line: true, items: [{ text: "样式", sub: true }, { text: "添加图层注解..." }, { text: "属性(&P)..." }] },
];
const exportMenu = [
  {
    items: [
      { text: "要素另存为(&A)..." },
      { text: "选中的要素另存为(&S)...", off: true },
      { text: "另存为图层定义文件(&D)..." },
      { text: "另存为QGIS图层样式文件(&Q)..." },
    ],
  },
];

/* ---------- track points ---------- */

const parse = (str) => str.split(" ").map((p) => p.split(",").map(Number));

const westArea = parse(
  "165,197 225,186 310,170 420,190 525,185 520,240 476,282 386,380 326,450 296,515 246,575 186,640 130,676 114,665 184,592 214,562 165,540 66,465 61,448 114,418 114,348 165,280"
);
const mainArea = parse(
  "850,197 1010,172 1040,165 1085,138 1100,150 1170,170 1230,190 1330,190 1332,155 1392,155 1395,190 1395,370 1410,400 1395,450 1395,500 1425,522 1395,570 1420,650 1396,690 1420,720 1420,870 1420,935 1396,960 1396,1060 1410,1090 1420,1180 1425,1200 1396,1260 1420,1290 1396,1340 1445,1365 1396,1445 1380,1464 1300,1480 1190,1518 1176,1500 1170,1470 960,1474 700,1492 680,1462 560,1462 470,1507 450,1484 320,1484 170,1455 168,1410 130,1395 165,1370 165,1290 106,1215 134,1178 174,1150 165,1000 116,960 106,930 154,870 154,850 214,782 292,706 324,690 324,640 334,580 354,534 394,474 452,418 522,386 662,332 752,267"
);
const gaps = [
  "690,617 720,608 748,630 715,625 690,640",
  "750,675 765,672 800,722 755,724",
  "928,697 965,662 958,700",
  "1018,660 1050,618 1085,615 1115,575 1128,640 1112,690 1060,662",
  "1160,658 1200,680 1250,702 1264,765 1244,772 1250,738 1205,692",
  "774,442 802,425 796,440",
  "1048,490 1068,490 1062,522 1050,515",
  "1303,1152 1360,1103 1358,1140 1320,1165",
  "1395,1140 1425,1125 1432,1155 1402,1166",
  "815,808 836,815 818,826",
  "118,484 142,455 160,478 156,520",
  "1030,1332 1056,1298 1050,1320",
  "86,456 98,460 92,466",
  "1423,770 1448,785 1438,820 1423,815",
].map(parse);
const roads = [
  "425,240 432,105 540,92 600,82 655,70 700,50",
  "524,188 515,95",
  "665,85 682,130 665,155 650,215 615,262",
  "680,135 714,137 704,180 752,165 700,215 645,265",
  "300,360 370,397 450,432 480,470",
  "270,515 330,572",
  "1395,335 1440,305 1475,270",
  "1400,440 1455,425 1460,462 1420,482",
  "1430,505 1466,492",
  "1400,700 1440,750 1460,790 1455,835 1415,872",
  "1396,1075 1465,1152 1420,1190 1330,1205",
  "160,870 110,930 125,965 165,1000",
  "175,1165 110,1215 165,1275",
  "840,200 750,265 660,330 520,386 430,440 370,510 335,600 322,670",
  "1170,1480 1190,1515 1300,1490 1380,1460",
  "690,1480 800,1480 960,1476 1030,1460",
  "900,700 1040,700 1180,720 1240,760",
  "295,712 210,795 150,860",
].map(parse);

const inside = (x, y, poly) => {
  let hit = false;
  for (let i = 0, j = poly.length - 1; i < poly.length; j = i++) {
    const [xi, yi] = poly[i];
    const [xj, yj] = poly[j];
    if (yi > y !== yj > y && x < ((xj - xi) * (y - yi)) / (yj - yi) + xi) hit = !hit;
  }
  return hit;
};

const makeRandom = (seed) => () => {
  seed = (seed * 1664525 + 1013904223) % 4294967296;
  return seed / 4294967296;
};

const buildTracks = () => {
  const rand = makeRandom(4326);
  const tracks = [];
  const free = (x, y) =>
    (inside(x, y, mainArea) || inside(x, y, westArea)) && !gaps.some((g) => inside(x, y, g));

  for (let n = 0; n < 5200; n++) {
    let x = 60 + rand() * 1400;
    let y = 140 + rand() * 1370;
    let dir = rand() < 0.6 ? (Math.floor(rand() * 4) * Math.PI) / 2 : rand() * Math.PI * 2;
    const bend = (rand() - 0.5) * 0.12;
    const kind = rand();
    // dense tracks merge into a dark band, loose ones keep every point readable
    const loose = kind > 0.82;
    const step = loose ? 6 + rand() * 5 : 8;
    const len = 3 + rand() * 9;
    const pts = [];
    for (let i = 0; i < len && free(x, y); i++) {
      pts.push([x, y]);
      x += Math.cos(dir) * step;
      y += Math.sin(dir) * step;
      dir += bend;
    }
    if (pts.length) tracks.push({ pts, loose, tone: kind < 0.5 ? "#40374c" : "#65557a" });
  }
  roads.forEach((road, r) => {
    const pts = [];
    for (let i = 1; i < road.length; i++) {
      const [x0, y0] = road[i - 1];
      const [x1, y1] = road[i];
      const count = Math.ceil(Math.hypot(x1 - x0, y1 - y0) / (r % 2 ? 9 : 5));
      for (let k = 0; k <= count; k++) {
        pts.push([x0 + ((x1 - x0) * k) / count + rand() * 3, y0 + ((y1 - y0) * k) / count + rand() * 3]);
      }
    }
    tracks.push({ pts, loose: true });
  });
  for (let n = 0; n < 230; n++) {
    const x = 130 + rand() * 1270;
    const y = 185 + rand() * 1280;
    if (free(x, y)) tracks.push({ pts: [[x, y]], loose: true });
  }
  return tracks;
};

// survey units -> canvas pixels
const px = (x) => Math.round((579 + x / 2.613) * 10) / 10;
const py = (y) => Math.round((417 + y / 2.703) * 10) / 10;
const toPoints = (poly) => poly.map(([x, y]) => `${px(x)},${py(y)}`).join(" ");

const Dot = ({ at: [x, y] }) => (
  <circle cx={px(x)} cy={py(y)} r="5" fill="#9b7fb9" stroke="#2b2930" strokeWidth="1.2" />
);

const Track = ({ pts, loose, tone }) => {
  if (loose) return pts.map((p, i) => <Dot key={i} at={p} />);
  const line = toPoints(pts);
  return (
    <>
      <polyline points={line} fill="none" stroke="#2b2930" strokeWidth="11" strokeLinecap="round" />
      <polyline points={line} fill="none" stroke={tone} strokeWidth="8" strokeDasharray="1 1.5" />
      {tone === "#65557a" && pts.length > 5 && <Dot at={pts[pts.length - 1]} />}
    </>
  );
};

const TrackMap = () => {
  const tracks = useMemo(buildTracks, []);
  return (
    <MapSvg viewBox="0 0 1652 1142" preserveAspectRatio="xMidYMid meet" role="img" aria-label="Output layer">
      <g fill="#3a3441" stroke="#2f2b34" strokeWidth="9" strokeLinejoin="round">
        <polygon points={toPoints(westArea)} />
        <polygon points={toPoints(mainArea)} />
      </g>
      {tracks.map((track, i) => (
        <Track key={i} {...track} />
      ))}
      <g fill="#fff">
        {gaps.map((g, i) => (
          <polygon key={i} points={toPoints(g)} />
        ))}
      </g>
    </MapSvg>
  );
};

/* ---------- parts ---------- */

const Label = ({ text }) => {
  const [before, after] = text.split("&");
  if (!after) return <span>{text}</span>;
  return (
    <span>
      {before}
      <u>{after[0]}</u>
      {after.slice(1)}
    </span>
  );
};

const ToolRow = ({ tools }) => (
  <ToolBar>
    {tools.map((tool, i) => {
      if (typeof tool === "number") {
        return (
          <Grip key={i} $width={tool}>
            <i />
          </Grip>
        );
      }
      if (tool === "|") return <Separator key={i} />;
      if (tool === "v") {
        return (
          <DropButton key={i} aria-label="更多">
            <Triangle $dir="down" $muted={tools[i - 1] === "digitize"} />
          </DropButton>
        );
      }
      return (
        <ToolButton key={i} aria-label={tool} $pressed={tool === "gear"}>
          <Icon name={tool} size={34} />
        </ToolButton>
      );
    })}
  </ToolBar>
);

const Menu = ({ groups, ...rest }) => (
  <MenuBox role="menu" {...rest}>
    {groups.map((group, i) => (
      <MenuGroup key={i} $line={group.line} $space={group.space}>
        {group.items.map((item) => (
          <MenuItem key={item.text} role="menuitem" disabled={item.off} $active={item.active}>
            <MenuIcon $pressed={item.pressed} $off={item.off}>
              {item.icon && <Icon name={item.icon} size={23} />}
            </MenuIcon>
            <Label text={item.text} />
            {item.sub && <Triangle $dir="right" $light={item.active} />}
          </MenuItem>
        ))}
      </MenuGroup>
    ))}
  </MenuBox>
);

const Spin = ({ id, value }) => (
  <Field $width={133}>
    <FieldInput id={id} defaultValue={value} />
    <Steps>
      <button aria-label="增加">
        <Triangle $dir="up" />
      </button>
      <button aria-label="减少">
        <Triangle $dir="down" />
      </button>
    </Steps>
  </Field>
);

const App = () => {
  const [layers, setLayers] = useState({ output: true, riding: false });
  const [render, setRender] = useState(true);

  const toggleLayer = (key) => setLayers({ ...layers, [key]: !layers[key] });

  return (
    <Window>
      <GlobalStyle />
      <TitleBar>
        <Icon name="qgis" size={24} />
        <h1>*无标题工程 — QGIS</h1>
        <WindowButton aria-label="最小化">
          <Icon name="minimize" size={15} />
        </WindowButton>
        <WindowButton aria-label="还原">
          <Icon name="restore" size={17} />
        </WindowButton>
        <WindowButton aria-label="关闭">
          <Icon name="close" size={15} />
        </WindowButton>
      </TitleBar>
      <MenuBar>
        {menuBar.map((text) => (
          <button key={text}>
            <Label text={text} />
          </button>
        ))}
      </MenuBar>
      <ToolRow tools={mainTools} />
      <ToolRow tools={editTools} />

      <Main>
        <LeftDock>
          <BrowserPanel>
            <DockTitle>浏览器</DockTitle>
            <DockTools>
              {["addLayer", "refresh", "funnel", "collapse", "info"].map((name) => (
                <DockButton key={name} aria-label={name}>
                  <Icon name={name} size={23} />
                </DockButton>
              ))}
            </DockTools>
            <Tree $pad={1}>
              {browserItems.map(([icon, text, expandable]) => (
                <TreeRow key={text}>
                  <Expander $width={29}>{expandable && <Triangle $dir="right" />}</Expander>
                  <Icon name={icon} size={22} />
                  <span>{text}</span>
                </TreeRow>
              ))}
            </Tree>
          </BrowserPanel>
          <LayerPanel>
            <DockTitle>图层</DockTitle>
            <DockTools>
              {["brush", "group", "eye", "funnel"].map((name) => (
                <DockButton key={name} aria-label={name}>
                  <Icon name={name} size={23} />
                </DockButton>
              ))}
            </DockTools>
            <Tree $pad={1}>
              <LayerRow $selected>
                <CheckBox
                  type="checkbox"
                  id="layer-output"
                  checked={layers.output}
                  onChange={() => toggleLayer("output")}
                />
                <Icon name="pointEdit" size={24} />
                <label htmlFor="layer-output">Output layer</label>
                <Icon name="memory" size={24} />
              </LayerRow>
              <LayerRow>
                <CheckBox
                  type="checkbox"
                  id="layer-riding"
                  checked={layers.riding}
                  onChange={() => toggleLayer("riding")}
                />
                <Icon name="point" size={24} />
                <label htmlFor="layer-riding">riding_routes_arcgis_with_id_2_part10</label>
              </LayerRow>
            </Tree>
            <HScroll>
              <button aria-label="向左">
                <Triangle $dir="left" />
              </button>
              <div />
              <button aria-label="向右">
                <Triangle $dir="right" />
              </button>
            </HScroll>
          </LayerPanel>
        </LeftDock>

        <Canvas>
          <TrackMap />
        </Canvas>
        <Splitter>
          <i />
        </Splitter>

        <RightDock>
          <DockTitle>
            工具箱
            <span>
              <button aria-label="浮动">
                <Icon name="dockFloat" size={18} />
              </button>
              <button aria-label="关闭面板">
                <Icon name="dockClose" size={18} />
              </button>
            </span>
          </DockTitle>
          <DockTools>
            <DockButton aria-label="模型">
              <Icon name="models" size={23} />
              <Triangle $dir="down" $corner />
            </DockButton>
            <DockButton aria-label="脚本">
              <Icon name="python" size={23} />
              <Triangle $dir="down" $corner />
            </DockButton>
            <DockButton aria-label="历史">
              <Icon name="clock" size={23} />
            </DockButton>
            <DockButton aria-label="结果">
              <Icon name="log" size={23} />
            </DockButton>
            <Separator $tight />
            <DockButton aria-label="就地编辑">
              <Icon name="editInPlace" size={23} />
            </DockButton>
            <Separator $tight />
            <DockButton aria-label="选项">
              <Icon name="wrench" size={23} />
            </DockButton>
          </DockTools>
          <SearchField>
            <Icon name="glass" size={20} />
            <input placeholder="搜索..." aria-label="搜索工具" />
          </SearchField>
          <ToolTree>
            <Tree>
              {toolGroups.map((text) => (
                <TreeRow key={text}>
                  <Expander $width={35}>
                    <Triangle $dir="right" />
                  </Expander>
                  <Icon name="qgis" size={23} />
                  <span>{text}</span>
                </TreeRow>
              ))}
              <TreeRow>
                <Expander $width={35}>
                  <Triangle $dir="right" />
                </Expander>
                <Icon name="gdal" size={23} />
                <span>GDAL</span>
              </TreeRow>
              <TreeRow>
                <Expander $width={35}>
                  <Triangle $dir="down" />
                </Expander>
                <Icon name="geohey" size={23} />
                <span>GeoHey</span>
              </TreeRow>
              <TreeRow $short>
                <Expander $width={64} $indent={28}>
                  <Triangle $dir="down" />
                </Expander>
                <span>China Coord Convert</span>
              </TreeRow>
              {convertTools.map((text, i) => (
                <TreeRow key={text} $hover={i === 1}>
                  <Expander $width={95} />
                  <Icon name="gear" size={23} />
                  <span>{text}</span>
                </TreeRow>
              ))}
              <TreeRow>
                <Expander $width={35}>
                  <Triangle $dir="right" />
                </Expander>
                <Icon name="grass" size={23} />
                <span>GRASS</span>
              </TreeRow>
            </Tree>
            <VScroll>
              <button aria-label="向上">
                <Triangle $dir="up" />
              </button>
              <div />
              <button aria-label="向下">
                <Triangle $dir="down" />
              </button>
            </VScroll>
          </ToolTree>
        </RightDock>
      </Main>

      <StatusBar>
        <SearchField $small>
          <Icon name="glass" size={20} />
          <input placeholder="搜索 (Ctrl+K)" aria-label="定位搜索" />
        </SearchField>
        <StatusItem $gap={5} $after={6}>
          <label htmlFor="coord">坐标</label>
          <Field $width={187}>
            <FieldInput id="coord" defaultValue="32.3513°, 118.7184°" />
          </Field>
        </StatusItem>
        <StatusItem $after={22}>
          <Icon name="tracking" size={24} />
        </StatusItem>
        <StatusItem $gap={5} $after={14}>
          <label htmlFor="scale">比例</label>
          <Field $width={124}>
            <ScaleSelect id="scale" defaultValue="1:173668">
              <option>1:173668</option>
              <option>1:100000</option>
            </ScaleSelect>
            <Steps $single>
              <Triangle $dir="down" />
            </Steps>
          </Field>
        </StatusItem>
        <StatusItem $after={12}>
          <Icon name="lock" size={24} />
        </StatusItem>
        <StatusItem $gap={5} $after={14}>
          <label htmlFor="magnifier">放大镜</label>
          <Spin id="magnifier" value="100%" />
        </StatusItem>
        <StatusItem $gap={14} $after={10}>
          <label htmlFor="rotation">旋转角度</label>
          <Spin id="rotation" value="0.0°" />
        </StatusItem>
        <StatusItem $gap={8} $after={22}>
          <CheckBox type="checkbox" id="render" checked={render} onChange={() => setRender(!render)} />
          <label htmlFor="render">渲染</label>
        </StatusItem>
        <CrsButton>
          <Icon name="projection" size={24} />
          EPSG:4326
        </CrsButton>
        <button aria-label="消息">
          <Icon name="message" size={26} />
        </button>
      </StatusBar>

      <LayerMenu groups={layerMenu} aria-label="图层菜单" />
      <ExportMenu groups={exportMenu} aria-label="导出菜单" />

      <ImeBar>
        <hr />
        <b>英</b>
        <Icon name="moon" size={32} />
        <Icon name="punctuation" size={32} />
        <b>简</b>
        <Icon name="smile" size={32} />
        <Icon name="settings" size={32} />
      </ImeBar>

      <Notes aria-hidden="true">
        <g fill="none" stroke="#fb5454" strokeWidth="6" strokeLinejoin="round">
          <rect x="145" y="682" width="354" height="58" />
          <rect x="519" y="679" width="372" height="63" />
          <rect x="16" y="803" width="436" height="49" />
        </g>
        <g fill="#fb5454" stroke="#fb5454" strokeWidth="1" strokeLinejoin="round">
          <polygon points="477,752 515,774 507,788 539,830 498,788 491,794" />
          <polygon points="839,761 877,780 870,787 939,868 855,791 851,801" />
          <polygon points="388,876 431,883 426,892 512,947 421,902 416,910" />
        </g>
      </Notes>
    </Window>
  );
};

/* ---------- styles ---------- */

const GlobalStyle = createGlobalStyle`
  * { box-sizing: border-box; }
  body {
    margin: 0;
    overflow: hidden;
    background: #efefef;
    color: #000;
    font: 18px/24px "Open Sans", "Noto Sans CJK SC", sans-serif;
  }
  button, input, select { font: inherit; color: inherit; }
  button { padding: 0; border: 0; background: none; }
  svg { flex: none; display: block; }
  u { text-underline-offset: 3px; }
`;

const Window = styled.div`
  position: relative;
  display: flex;
  flex-direction: column;
  height: 100vh;
  overflow: hidden;
  white-space: nowrap;
`;

const TitleBar = styled.header`
  display: flex;
  align-items: center;
  height: 34px;
  padding-left: 2px;
  background: #f3f1f3;
  h1 {
    flex: 1;
    margin: 0 0 0 9px;
    font-size: 18px;
    font-weight: 400;
  }
`;
const WindowButton = styled.button`
  display: grid;
  place-items: center;
  width: 71px;
  height: 34px;
`;

const MenuBar = styled.nav`
  display: flex;
  height: 31px;
  padding-left: 4px;
  border-bottom: 2px solid #d9d9d9;
  button {
    padding: 0 12px;
    line-height: 28px;
  }
`;

const ToolBar = styled.div`
  display: flex;
  align-items: center;
  height: 59px;
  border-bottom: 2px solid #b8b8b8;
  background: linear-gradient(#fafafa, #eeeeee);
`;
const ToolButton = styled.button`
  display: grid;
  place-items: center;
  flex: none;
  width: 49px;
  height: 47px;
  ${({ $pressed }) =>
    $pressed &&
    css`
      border: 1px solid #adadad;
      border-radius: 4px;
      background: #dadada;
    `}
`;
const DropButton = styled.button`
  display: grid;
  place-items: center;
  width: 19px;
  height: 47px;
`;
const Grip = styled.span`
  display: grid;
  place-items: center;
  flex: none;
  width: ${({ $width }) => $width}px;
  i {
    width: 7px;
    height: 26px;
    background: radial-gradient(circle, #b4b4b4 1px, transparent 1px) 0 0 / 4px 5px;
  }
`;
const Separator = styled.span`
  flex: none;
  width: 2px;
  height: 28px;
  margin: 0 ${({ $tight }) => ($tight ? 4 : 5)}px;
  background: #d6d6d6;
`;

const arrows = {
  right: "border-width: 6px 0 6px 7px; border-left-color: currentColor;",
  left: "border-width: 6px 7px 6px 0; border-right-color: currentColor;",
  down: "border-width: 7px 6px 0 6px; border-top-color: currentColor;",
  up: "border-width: 0 6px 7px 6px; border-bottom-color: currentColor;",
};
const Triangle = styled.i`
  width: 0;
  height: 0;
  border: 0 solid transparent;
  color: ${({ $light, $muted }) => ($light ? "#cfe6fa" : $muted ? "#aaa" : "#5a5a5a")};
  ${({ $dir }) => arrows[$dir]}
  ${({ $corner }) => $corner && "position: absolute; right: 3px; bottom: -2px;"}
`;

const Main = styled.main`
  display: flex;
  flex: 1;
  min-height: 0;
`;
const LeftDock = styled.aside`
  display: flex;
  flex-direction: column;
  gap: 10px;
  width: 440px;
  margin-right: 10px;
`;
const BrowserPanel = styled.section`
  display: flex;
  flex-direction: column;
  height: 548px;
`;
const LayerPanel = styled.section`
  display: flex;
  flex: 1;
  flex-direction: column;
  min-height: 0;
`;
const DockTitle = styled.h2`
  display: flex;
  justify-content: space-between;
  flex: none;
  margin: 0;
  padding: 2px 1px 4px 5px;
  font-size: 18px;
  font-weight: 400;
  span {
    display: flex;
    align-items: center;
    gap: 3px;
  }
`;
const DockTools = styled.div`
  display: flex;
  align-items: center;
  flex: none;
  height: 45px;
  padding: 0 0 4px 5px;
`;
const DockButton = styled.button`
  position: relative;
  display: grid;
  place-items: center;
  width: 37px;
`;
const Tree = styled.div`
  flex: 1;
  min-height: 0;
  overflow: hidden;
  padding-top: ${({ $pad = 0 }) => $pad}px;
  border: solid #b8b8b8;
  border-width: 0 0 1px 2px;
  background: #fff;
`;
const TreeRow = styled.div`
  display: flex;
  align-items: center;
  height: ${({ $short }) => ($short ? 24 : 27)}px;
  background: ${({ $hover }) => ($hover ? "#efefef" : "none")};
  span + svg + span {
    margin-left: 9px;
  }
`;
const Expander = styled.span`
  display: grid;
  flex: none;
  align-items: center;
  justify-items: start;
  width: ${({ $width }) => $width}px;
  padding-left: ${({ $indent = 0 }) => 10 + $indent}px;
`;

const LayerRow = styled.div`
  display: flex;
  align-items: center;
  height: 27px;
  padding: 0 ${({ $selected }) => ($selected ? 16 : 0)}px 0 34px;
  background: ${({ $selected }) => ($selected ? "#0078d7" : "none")};
  color: ${({ $selected }) => ($selected ? "#fff" : "#808080")};
  font-size: ${({ $selected }) => ($selected ? 18 : 19)}px;
  font-weight: 700;
  font-style: ${({ $selected }) => ($selected ? "normal" : "italic")};
  text-decoration: ${({ $selected }) => ($selected ? "underline" : "none")};
  input + svg {
    margin: 0 9px;
  }
  label {
    flex: 1;
    text-underline-offset: 3px;
  }
`;
const CheckBox = styled.input`
  appearance: none;
  display: grid;
  place-items: center;
  flex: none;
  width: 21px;
  height: 21px;
  margin: 0;
  border: 1px solid #b4b4b4;
  background: #fff;
  &:checked::after {
    content: "";
    width: 13px;
    height: 14px;
    background: #000;
    clip-path: polygon(0 50%, 14% 46%, 34% 70%, 86% 0, 100% 8%, 40% 100%, 28% 100%);
  }
`;

const HScroll = styled.div`
  display: flex;
  flex: none;
  height: 21px;
  border-bottom: 1px solid #b8b8b8;
  border-left: 2px solid #b8b8b8;
  background: #e2e2e2;
  button {
    display: grid;
    place-items: center;
    width: 20px;
    background: #fafafa;
  }
  div {
    flex: 1;
    margin-right: 11px;
    border: solid #b8b8b8;
    border-width: 0 2px;
    background: linear-gradient(#fff, #f0f0f0);
  }
`;
const VScroll = styled.div`
  display: flex;
  flex-direction: column;
  width: 21px;
  border-left: 1px solid #c4c4c4;
  background: linear-gradient(90deg, #f2f2f2, #fff);
  button {
    display: grid;
    place-items: center;
    height: 20px;
    background: #fafafa;
  }
  div {
    height: 50px;
    margin-bottom: auto;
    border: solid #b8b8b8;
    border-width: 1px 0;
    background: #e4e4e4;
  }
  button:last-child {
    border-top: 1px solid #b8b8b8;
  }
`;

const Canvas = styled.section`
  flex: 1;
  min-width: 0;
  border: solid #b8b8b8;
  border-width: 0 1px 1px 1px;
  background: #fff;
`;
const MapSvg = styled.svg`
  width: 100%;
  height: 100%;
`;
const Splitter = styled.div`
  display: grid;
  place-items: center;
  width: 11px;
  i {
    width: 3px;
    height: 26px;
    background: radial-gradient(circle, #b4b4b4 1px, transparent 1px) 0 0 / 3px 5px;
  }
`;
const RightDock = styled.aside`
  display: flex;
  flex-direction: column;
  width: 445px;
`;
const ToolTree = styled.div`
  display: flex;
  flex: 1;
  min-height: 0;
  ${Tree} {
    border-left-width: 1px;
  }
  ${Expander} {
    margin-left: 1px;
  }
`;

const SearchField = styled.div`
  display: flex;
  align-items: center;
  flex: none;
  width: ${({ $small }) => ($small ? "300px" : "auto")};
  height: 33px;
  padding-left: 11px;
  border: 2px solid #b4b4b4;
  border-radius: 4px;
  background: #fff;
  input {
    flex: 1;
    min-width: 0;
    margin-left: 10px;
    padding: 0;
    border: 0;
    outline: 0;
    background: none;
    font: 16px/24px "Liberation Mono", "Noto Sans CJK SC", monospace;
  }
  input::placeholder {
    color: #808080;
  }
`;

const StatusBar = styled.footer`
  display: flex;
  align-items: center;
  height: 39px;
  padding: 4px 8px 0 6px;
  font-size: 16px;
  > div:first-child {
    margin-right: auto;
  }
`;
const StatusItem = styled.div`
  display: flex;
  align-items: center;
  gap: ${({ $gap = 0 }) => $gap}px;
  margin-right: ${({ $after }) => $after}px;
`;
const Field = styled.div`
  display: flex;
  width: ${({ $width }) => $width}px;
  height: 32px;
  border: 2px solid #b4b4b4;
  border-radius: 4px;
  background: #fff;
`;
const fieldText = css`
  flex: 1;
  min-width: 0;
  padding: 0 0 0 3px;
  border: 0;
  background: none;
  font: 15px/24px "Liberation Mono", monospace;
`;
const FieldInput = styled.input`
  ${fieldText}
`;
const ScaleSelect = styled.select`
  appearance: none;
  ${fieldText}
`;
const Steps = styled.span`
  display: flex;
  flex-direction: column;
  align-items: center;
  justify-content: center;
  width: ${({ $single }) => ($single ? 29 : 20)}px;
  border-left: 1px solid #b4b4b4;
  background: linear-gradient(#fff, #eee);
  pointer-events: ${({ $single }) => ($single ? "none" : "auto")};
  button {
    display: grid;
    flex: 1;
    place-items: center;
    width: 100%;
    line-height: 0;
  }
`;
const CrsButton = styled.button`
  display: flex;
  align-items: center;
  gap: 2px;
  margin-right: 43px;
  font: 14px/24px "Liberation Mono", monospace;
`;

const MenuBox = styled.div`
  position: absolute;
  border: 2px solid #999;
  background: #fff;
  box-shadow: 3px 3px 4px rgba(0, 0, 0, 0.35);
`;
const LayerMenu = styled(Menu)`
  top: 23px;
  left: 165px;
  width: 348px;
`;
const ExportMenu = styled(Menu)`
  top: 693px;
  left: 513px;
  width: 338px;
`;
const MenuGroup = styled.div`
  ${({ $space }) => $space && "padding-top: 3px;"}
  ${({ $line }) =>
    $line &&
    css`
      &::before {
        content: "";
        display: block;
        height: 2px;
        margin: 0 6px;
        border-top: 1px solid #bdbdbd;
      }
    `}
`;
const MenuItem = styled.button`
  display: flex;
  align-items: center;
  width: 100%;
  height: 34px;
  padding: 0 4px 0 5px;
  background: ${({ $active }) => ($active ? "#0078d7" : "none")};
  color: ${({ $active, disabled }) => ($active ? "#fff" : disabled ? "#787878" : "#000")};
  text-align: left;
  &:nth-child(even) {
    height: 35px;
  }
  span + span {
    flex: 1;
    margin-left: 5px;
  }
`;
const MenuIcon = styled.span`
  display: grid;
  place-items: center;
  width: 30px;
  height: 33px;
  opacity: ${({ $off }) => ($off ? 0.4 : 1)};
  ${({ $pressed }) =>
    $pressed &&
    css`
      border: 1px solid #a8a8a8;
      border-radius: 3px;
      background: #dcdcdc;
    `}
`;

const ImeBar = styled.div`
  position: absolute;
  top: 8px;
  left: 2061px;
  display: flex;
  align-items: center;
  gap: 16px;
  width: 322px;
  height: 53px;
  padding: 0 6px 0 13px;
  border: 2px solid #a5a5a5;
  border-radius: 11px;
  background: #333;
  color: #fff;
  box-shadow: 0 26px 60px rgba(0, 0, 0, 0.3);
  hr {
    width: 5px;
    height: 24px;
    margin: 0 9px 0 0;
    border: 0;
    border-radius: 3px;
    background: #999;
  }
  b {
    font-size: 31px;
    font-weight: 400;
    line-height: 40px;
  }
`;

const Notes = styled.svg`
  position: absolute;
  top: 0;
  left: 0;
  width: 100%;
  height: 100%;
  pointer-events: none;
`;

export default App;
